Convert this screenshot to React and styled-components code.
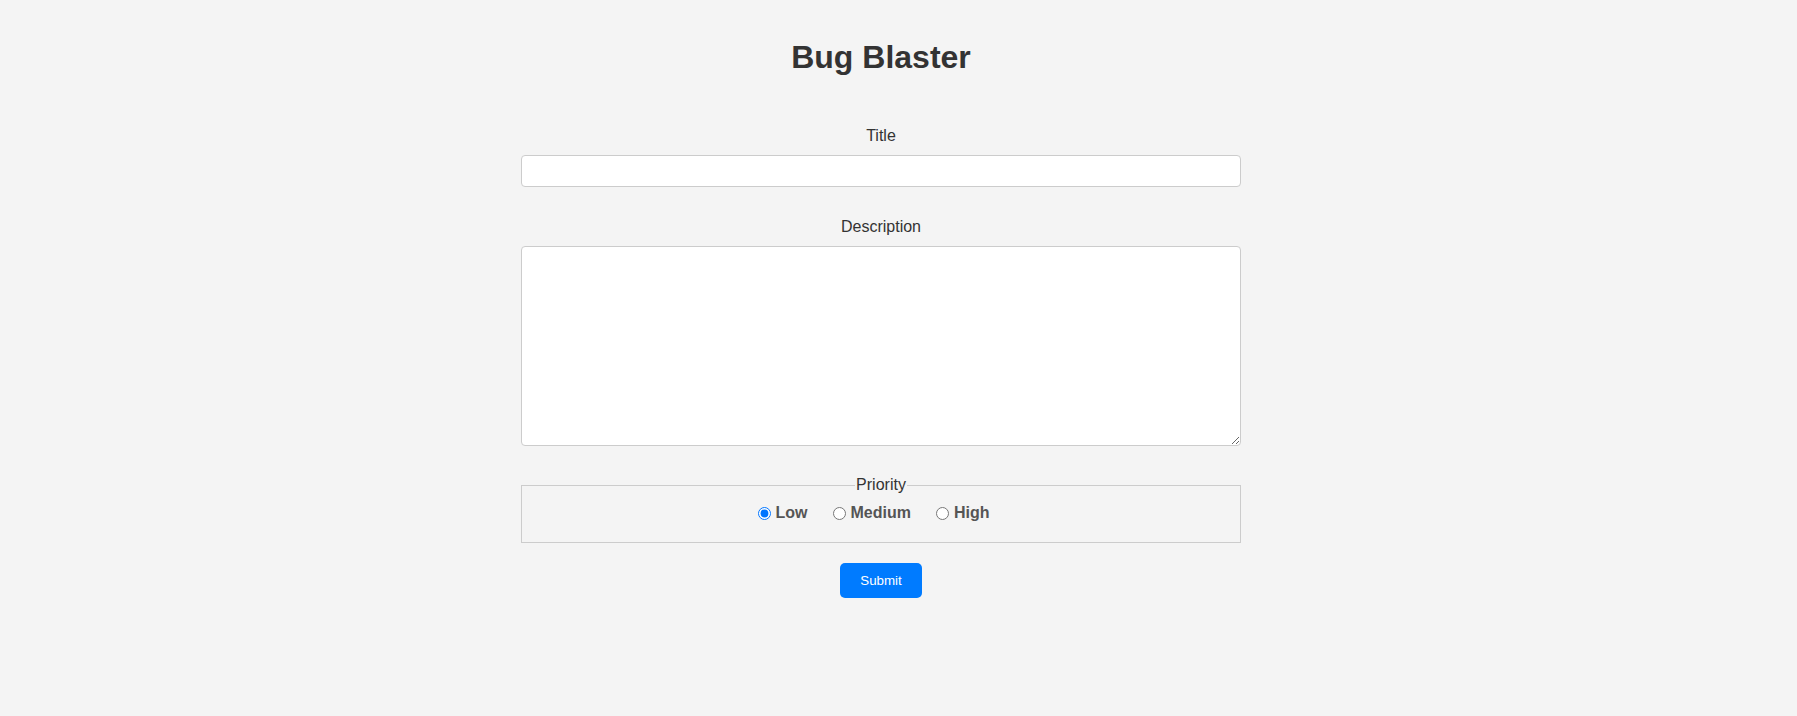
import React, { useState } from "react";
import styled, { createGlobalStyle } from "styled-components";

const GlobalStyle = createGlobalStyle`
  html, body {
    margin: 0;
    padding: 0;
    background: #f4f4f4;
    font-family: "Liberation Sans", Arial, sans-serif;
    color: #333;
  }
`;

const Page = styled.div`
  padding: 0 35px 40px 0;
  display: flex;
  flex-direction: column;
  align-items: center;
`;

const Heading = styled.h1`
  margin: 39px 0 51px;
  font-size: 32px;
  line-height: 37px;
  font-weight: bold;
  color: #333;
  text-align: center;
`;

const Form = styled.form`
  width: 720px;
  display: flex;
  flex-direction: column;
  align-items: stretch;
`;

const Group = styled.div`
  margin-bottom: ${(p) => p.$gap || 31}px;
  text-align: center;
`;

const Label = styled.label`
  display: block;
  font-size: 16px;
  line-height: 18px;
  color: #333;
  margin-bottom: 10px;
  text-align: center;
`;

const TextInput = styled.input`
  display: block;
  width: 100%;
  height: 32px;
  box-sizing: border-box;
  border: 1px solid #ccc;
  border-radius: 4px;
  background: #fff;
  padding: 8px;
  font-family: "Liberation Sans", Arial, sans-serif;
  font-size: 14px;
  outline: none;
`;

const TextArea = styled.textarea`
  display: block;
  width: 100%;
  height: 200px;
  box-sizing: border-box;
  border: 1px solid #ccc;
  border-radius: 4px;
  background: #fff;
  padding: 8px;
  font-family: "Liberation Sans", Arial, sans-serif;
  font-size: 14px;
  outline: none;
`;

const Fieldset = styled.fieldset`
  margin: 0 0 20px;
  padding: 10px 0 20px;
  border: 1px solid #ccc;
  text-align: center;
  min-width: 0;
`;

const Legend = styled.legend`
  font-size: 16px;
  line-height: 18px;
  color: #333;
  padding: 0 1px;
  margin: 0 auto;
`;

const RadioLabel = styled.label`
  display: inline-block;
  margin-right: 20px;
  font-size: 16px;
  font-weight: bold;
  color: #555;
`;

const Radio = styled.input`
  margin: 3px 5px 0 5px;
  vertical-align: -2px;
  accent-color: #0075ff;
`;

const ButtonRow = styled.div`
  display: flex;
  justify-content: center;
`;

const SubmitButton = styled.button`
  background: #007bff;
  color: #fff;
  border: none;
  border-radius: 5px;
  padding: 10px 20px;
  font-family: "Liberation Sans", Arial, sans-serif;
  font-size: 13.33px;
  line-height: 15px;
  font-weight: normal;
  cursor: pointer;
`;

export default function App() {
  const [priority, setPriority] = useState("Low");
  const options = ["Low", "Medium", "High"];
  return (
    <>
      <GlobalStyle />
      <Page>
        <Heading>Bug Blaster</Heading>
        <Form onSubmit={(e) => e.preventDefault()}>
          <Group>
            <Label htmlFor="title">Title</Label>
            <TextInput id="title" type="text" />
          </Group>
          <Group $gap={30}>
            <Label htmlFor="description">Description</Label>
            <TextArea id="description" />
          </Group>
          <Fieldset>
            <Legend>Priority</Legend>
            {options.map((opt) => (
              <RadioLabel key={opt}>
                <Radio
                  type="radio"
                  name="priority"
                  value={opt}
                  checked={priority === opt}
                  onChange={() => setPriority(opt)}
                />
                {opt}
              </RadioLabel>
            ))}
          </Fieldset>
          <ButtonRow>
            <SubmitButton type="submit">Submit</SubmitButton>
          </ButtonRow>
        </Form>
      </Page>
    </>
  );
}
